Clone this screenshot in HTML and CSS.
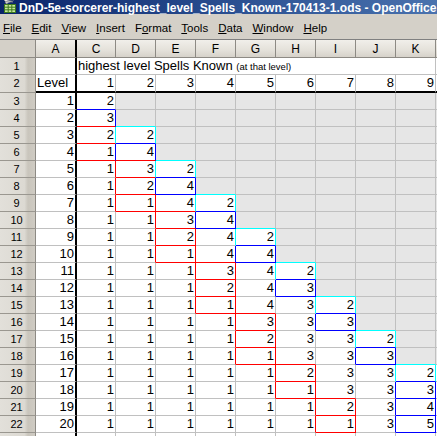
FILE: index.html
```html
<!DOCTYPE html>
<html>
<head>
<meta charset="utf-8">
<title>DnD-5e-sorcerer-highest_level_Spells_Known-170413-1.ods - OpenOffice</title>
<link rel="stylesheet" href="styles.css">
</head>
<body>
<div class="window">
  <div class="titlebar">
    <svg class="icon" viewBox="0 0 16 16" width="16" height="16">
      <path d="M2 2 C5 0 9 0 12 2 C9 1.5 6 2 4 4 Z" fill="#e8e8e8" stroke="#9a9a9a" stroke-width="0.6"/>
      <path d="M3 4 C6 2.5 9 2.5 11 4 C8 3.8 6 4.4 4.5 6 Z" fill="#d0d0d0" stroke="#8a8a8a" stroke-width="0.6"/>
      <rect x="2.5" y="6.5" width="11" height="8" fill="#c8e89a" stroke="#3c7a1e"/>
      <path d="M2.5 9.2H13.5M2.5 11.8H13.5M6.2 6.5V14.5M9.8 6.5V14.5" stroke="#3c7a1e" stroke-width="1"/>
    </svg>
    <span class="title">DnD-5e-sorcerer-highest_level_Spells_Known-170413-1.ods - OpenOffice</span>
  </div>
  <div class="menubar">
    <span class="mi"><u>F</u>ile</span>
    <span class="mi"><u>E</u>dit</span>
    <span class="mi"><u>V</u>iew</span>
    <span class="mi"><u>I</u>nsert</span>
    <span class="mi">F<u>o</u>rmat</span>
    <span class="mi"><u>T</u>ools</span>
    <span class="mi"><u>D</u>ata</span>
    <span class="mi"><u>W</u>indow</span>
    <span class="mi"><u>H</u>elp</span>
  </div>
  <div class="sheet">
    <!-- column headers -->
    <div class="corner"></div>
    <div class="ch cha">A</div>
    <div class="ch">C</div><div class="ch">D</div><div class="ch">E</div><div class="ch">F</div><div class="ch">G</div><div class="ch">H</div><div class="ch">I</div><div class="ch">J</div><div class="ch">K</div>
    <div class="ch chl"></div>

    <!-- row 1 -->
    <div class="rh">1</div><div class="a"></div>
    <div class="title-cell">highest level Spells Known <small>(at that level)</small></div>
    <div class="l"></div>

    <!-- row 2 -->
    <div class="rh r2h">2</div><div class="a r2 lft">Level</div>
    <div class="w r2">1</div><div class="w r2">2</div><div class="w r2">3</div><div class="w r2">4</div><div class="w r2">5</div><div class="w r2">6</div><div class="w r2">7</div><div class="w r2">8</div><div class="w r2">9</div>
    <div class="l r2"></div>

    <!-- row 3 -->
    <div class="rh">3</div><div class="a">1</div>
    <div class="w bb">2</div><div class="g"></div><div class="g"></div><div class="g"></div><div class="g"></div><div class="g"></div><div class="g"></div><div class="g"></div><div class="g"></div>
    <div class="l g"></div>

    <!-- row 4 -->
    <div class="rh">4</div><div class="a">2</div>
    <div class="w rb br">3</div><div class="g bc"></div><div class="g"></div><div class="g"></div><div class="g"></div><div class="g"></div><div class="g"></div><div class="g"></div><div class="g"></div>
    <div class="l g"></div>

    <!-- row 5 -->
    <div class="rh">5</div><div class="a">3</div>
    <div class="w rc br">2</div><div class="w rc bb">2</div><div class="g"></div><div class="g"></div><div class="g"></div><div class="g"></div><div class="g"></div><div class="g"></div><div class="g"></div>
    <div class="l g"></div>

    <!-- row 6 -->
    <div class="rh">6</div><div class="a">4</div>
    <div class="w rb br">1</div><div class="w rb br">4</div><div class="g bc"></div><div class="g"></div><div class="g"></div><div class="g"></div><div class="g"></div><div class="g"></div><div class="g"></div>
    <div class="l g"></div>

    <!-- row 7 -->
    <div class="rh">7</div><div class="a">5</div>
    <div class="w rr">1</div><div class="w rc br">3</div><div class="w rc bb">2</div><div class="g"></div><div class="g"></div><div class="g"></div><div class="g"></div><div class="g"></div><div class="g"></div>
    <div class="l g"></div>

    <!-- row 8 -->
    <div class="rh">8</div><div class="a">6</div>
    <div class="w rr">1</div><div class="w rb br">2</div><div class="w rb bb">4</div><div class="g bc"></div><div class="g"></div><div class="g"></div><div class="g"></div><div class="g"></div><div class="g"></div>
    <div class="l g"></div>

    <!-- row 9 -->
    <div class="rh">9</div><div class="a">7</div>
    <div class="w rr">1</div><div class="w rr br">1</div><div class="w rc br">4</div><div class="w rc bb">2</div><div class="g"></div><div class="g"></div><div class="g"></div><div class="g"></div><div class="g"></div>
    <div class="l g"></div>

    <!-- row 10 -->
    <div class="rh">10</div><div class="a">8</div>
    <div class="w">1</div><div class="w rr">1</div><div class="w rb br">3</div><div class="w rb bb">4</div><div class="g bc"></div><div class="g"></div><div class="g"></div><div class="g"></div><div class="g"></div>
    <div class="l g"></div>

    <!-- row 11 -->
    <div class="rh">11</div><div class="a">9</div>
    <div class="w">1</div><div class="w rr">1</div><div class="w rr br">2</div><div class="w rc">4</div><div class="w rc bb">2</div><div class="g"></div><div class="g"></div><div class="g"></div><div class="g"></div>
    <div class="l g"></div>

    <!-- row 12 -->
    <div class="rh">12</div><div class="a">10</div>
    <div class="w">1</div><div class="w rr">1</div><div class="w rr br">1</div><div class="w rb br">4</div><div class="w rb bb">4</div><div class="g bc"></div><div class="g"></div><div class="g"></div><div class="g"></div>
    <div class="l g"></div>

    <!-- row 13 -->
    <div class="rh">13</div><div class="a">11</div>
    <div class="w">1</div><div class="w">1</div><div class="w rr">1</div><div class="w rr br">3</div><div class="w rc">4</div><div class="w rc bb">2</div><div class="g"></div><div class="g"></div><div class="g"></div>
    <div class="l g"></div>

    <!-- row 14 -->
    <div class="rh">14</div><div class="a">12</div>
    <div class="w">1</div><div class="w">1</div><div class="w rr">1</div><div class="w rr br">2</div><div class="w rb">4</div><div class="w rb bb">3</div><div class="g bc"></div><div class="g"></div><div class="g"></div>
    <div class="l g"></div>

    <!-- row 15 -->
    <div class="rh">15</div><div class="a">13</div>
    <div class="w">1</div><div class="w">1</div><div class="w rr">1</div><div class="w rr br">1</div><div class="w br">4</div><div class="w rc">3</div><div class="w rc bb">2</div><div class="g"></div><div class="g"></div>
    <div class="l g"></div>

    <!-- row 16 -->
    <div class="rh">16</div><div class="a">14</div>
    <div class="w">1</div><div class="w">1</div><div class="w">1</div><div class="w rr">1</div><div class="w rr br">3</div><div class="w rb">3</div><div class="w rb bb">3</div><div class="g bc"></div><div class="g"></div>
    <div class="l g"></div>

    <!-- row 17 -->
    <div class="rh">17</div><div class="a">15</div>
    <div class="w">1</div><div class="w">1</div><div class="w">1</div><div class="w rr">1</div><div class="w rr br">2</div><div class="w">3</div><div class="w rc">3</div><div class="w rc bb">2</div><div class="g"></div>
    <div class="l g"></div>

    <!-- row 18 -->
    <div class="rh">18</div><div class="a">16</div>
    <div class="w">1</div><div class="w">1</div><div class="w">1</div><div class="w rr">1</div><div class="w rr br">1</div><div class="w br">3</div><div class="w rb">3</div><div class="w rb bb">3</div><div class="g bc"></div>
    <div class="l g"></div>

    <!-- row 19 -->
    <div class="rh">19</div><div class="a">17</div>
    <div class="w">1</div><div class="w">1</div><div class="w">1</div><div class="w">1</div><div class="w rr">1</div><div class="w rr br">2</div><div class="w">3</div><div class="w rc">3</div><div class="w rc bb">2</div>
    <div class="l"></div>

    <!-- row 20 -->
    <div class="rh">20</div><div class="a">18</div>
    <div class="w">1</div><div class="w">1</div><div class="w">1</div><div class="w">1</div><div class="w rr">1</div><div class="w rr br">1</div><div class="w br">3</div><div class="w rb">3</div><div class="w rb bb">3</div>
    <div class="l"></div>

    <!-- row 21 -->
    <div class="rh">21</div><div class="a">19</div>
    <div class="w">1</div><div class="w">1</div><div class="w">1</div><div class="w">1</div><div class="w">1</div><div class="w rr">1</div><div class="w rr br">2</div><div class="w rb">3</div><div class="w rb bb">4</div>
    <div class="l"></div>

    <!-- row 22 -->
    <div class="rh">22</div><div class="a">20</div>
    <div class="w">1</div><div class="w">1</div><div class="w">1</div><div class="w">1</div><div class="w">1</div><div class="w rr">1</div><div class="w rr br">1</div><div class="w rb">3</div><div class="w rb bb">5</div>
    <div class="l"></div>

    <!-- row 23 (cut off by the window edge) -->
    <div class="rh"></div><div class="a"></div>
    <div class="w"></div><div class="w"></div><div class="w"></div><div class="w"></div><div class="w"></div><div class="w"></div><div class="w"></div><div class="w"></div><div class="w"></div>
    <div class="l"></div>
  </div>
</div>
</body>
</html>
```

FILE: styles.css
```css
* { box-sizing: border-box; }

html, body {
  margin: 0;
  padding: 0;
}

body {
  width: 437px;
  height: 436px;
  overflow: hidden;
  background: #ffffff;
  font-family: "Liberation Sans", Arial, sans-serif;
}

.window {
  width: 437px;
  height: 436px;
  overflow: hidden;
}

/* ---------- title bar ---------- */
.titlebar {
  height: 14px;
  display: flex;
  align-items: flex-start;
  background: linear-gradient(90deg, #0a246a 0%, #2f5596 60%, #4a72ae 100%);
  color: #ffffff;
  font-weight: bold;
  font-size: 12px;
  line-height: 14px;
  white-space: nowrap;
}

.titlebar .icon {
  flex: none;
  width: 16px;
  height: 16px;
  margin: -2px 1px 0 2px;
}

.titlebar .title {
  padding-top: 1px;
}

/* ---------- menu bar ---------- */
.menubar {
  height: 26px;
  display: flex;
  padding: 8px 0 0 3px;
  background: #d4d0c8;
  border-bottom: 1px solid #808080;
  font-size: 11.5px;
  line-height: 13px;
  color: #000000;
}

.mi {
  margin-right: 10px;
}

.mi u {
  text-decoration: underline;
}

/* ---------- sheet grid ---------- */
.sheet {
  display: grid;
  grid-template-columns: 36px 41px 39px repeat(8, 40px) 1px;
  font-size: 13px;
  line-height: 16px;
}

.sheet > div {
  height: 17px;
  border-right: 1px solid #c0c0c0;
  border-bottom: 1px solid #c0c0c0;
  background: #ffffff;
  text-align: right;
  padding-right: 1px;
  white-space: nowrap;
}

/* headers */
.sheet > .corner,
.sheet > .ch {
  height: 18px;
  background: linear-gradient(180deg, #f1efea 0%, #e4e1da 60%, #d6d2ca 100%);
  border-right: 1px solid #8d8a84;
  border-bottom: 1px solid #8d8a84;
  text-align: center;
  padding: 0;
  font-size: 12px;
  line-height: 18px;
  color: #000000;
}

.sheet > .corner {
  background: #d4d0c8;
}

.sheet > .cha {
  border-right: 2px solid #000000;
}

.sheet > .chl {
  border-right: 0;
}

.sheet > .rh {
  background: linear-gradient(90deg, #e2e0da 0%, #dcd9d2 70%, #c9c5bc 80%, #cfcbc3 100%);
  border-right: 1px solid #8d8a84;
  border-bottom: 1px solid #9a9790;
  text-align: center;
  padding: 0 2px 0 0;
  font-size: 11px;
  color: #000000;
}

.sheet > .r2h {
  height: 18px;
}

/* column A */
.sheet > .a {
  border-right: 2px solid #000000;
}

.sheet > .lft {
  text-align: left;
  padding-left: 1px;
}

/* row 2 (frozen) */
.sheet > .r2 {
  height: 18px;
  border-bottom: 2px solid #000000;
}

/* title text in row 1 */
.sheet > .title-cell {
  grid-column: span 9;
  text-align: left;
  padding-left: 1px;
}

.title-cell small {
  font-size: 9.5px;
}

/* empty cells */
.sheet > .g {
  background: #e6e6e6;
}

.sheet > .l {
  border-right: 0;
}

/* coloured cell edges: right edge (r*) and bottom edge (b*) */
.sheet > .rr { border-right-color: #ff0000; }
.sheet > .rb { border-right-color: #0000ff; }
.sheet > .rc { border-right-color: #00ffff; }
.sheet > .br { border-bottom-color: #ff0000; }
.sheet > .bb { border-bottom-color: #0000ff; }
.sheet > .bc { border-bottom-color: #00ffff; }
```
